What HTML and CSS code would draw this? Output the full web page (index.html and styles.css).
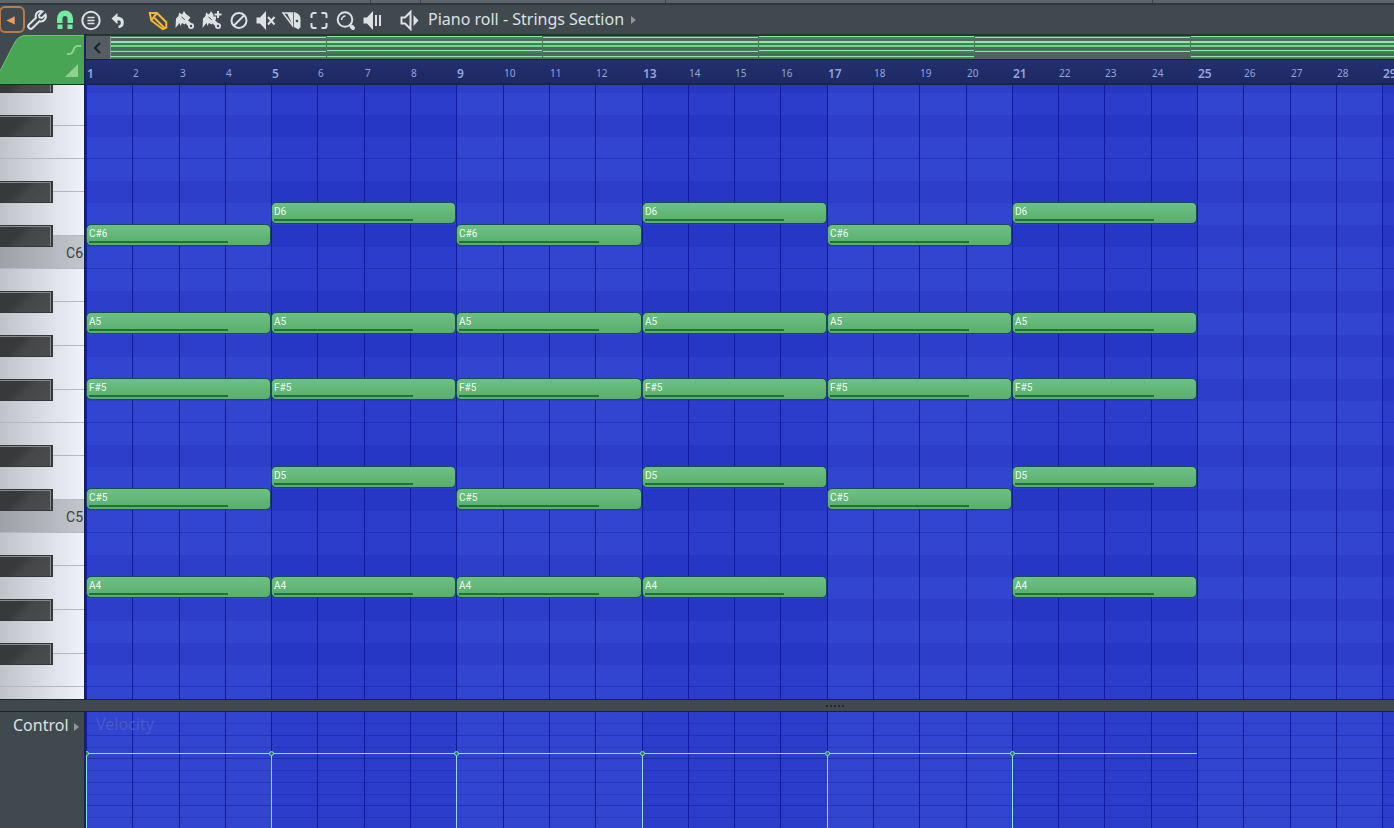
FILE: index.html
```html
<!DOCTYPE html>
<html lang="en">
<head>
  <meta charset="UTF-8">
  <title>Piano roll - Strings Section</title>
  <link rel="stylesheet" href="styles.css">
</head>
<body>
  <div class="window-edge"><span></span><span></span><span></span><span></span></div>

  <header class="toolbar">
    <button class="menu-btn" aria-label="Menu">
      <svg width="24" height="24" viewBox="0 0 24 24"><path d="M6 12.5 15 8v9z" fill="#f09a5c"/></svg>
    </button>
    <div class="tools tools-main">
      <button aria-label="Tools">
        <svg viewBox="0 0 22 22"><path d="M18.500 5.500 15 9l-2.500-.5L12 6l3.500-3.500a5 5 0 0 0-6.500 6.300L2 15.500a2.400 2.400 0 0 0 3.500 3.500l7-6.800a5 5 0 0 0 6-6.700z" class="line"/></svg>
      </button>
      <button aria-label="Snap">
        <svg viewBox="0 0 22 22"><path d="M3 14V9.500a8 8 0 0 1 16 0V14h-5.500V9.500a2.500 2.500 0 0 0-5 0V14zM3.500 15.500h5V20h-5zM13.500 15.500h5V20h-5z" fill="#73eda0"/></svg>
      </button>
      <button aria-label="Stamp">
        <svg viewBox="0 0 22 22"><circle cx="11" cy="11.500" r="8.700" class="line"/><path d="M7.500 8.500h7M7.500 11.500h7M7.500 14.500h7" class="line thin"/></svg>
      </button>
      <button aria-label="Undo">
        <svg viewBox="0 0 22 22"><path d="M4.500 9.500 10.500 4v3.800c4.200 0 6.300 2.200 6.300 5.700 0 3.200-1.700 5.500-5.300 5.500v-2.500c1.800-.2 2.300-1.200 2.300-2.800 0-1.700-.8-2.500-3.300-2.500v4z" class="solid"/></svg>
      </button>
    </div>
    <div class="tools tools-edit">
      <button aria-label="Draw">
        <svg viewBox="0 0 22 22" class="active"><path d="M2.800 4h7.200l9.300 9.200v5.300l-3.500 1.700L4.300 11.500zM4.300 11.500l2-3 3.700-4.500M7.500 9l9.500 9.500" class="line"/></svg>
      </button>
      <button aria-label="Paint">
        <svg viewBox="0 0 22 22"><path d="M2 9.500 4.500 7 5 3.500l3 2L10 2l2 3 4.500 3.500-6 7L8 14l-1.500 3-1-3L1.500 19z" class="solid"/><path d="m7.500 8 6 5" class="cut"/><path d="m12 12 5 5" class="line thick"/><circle cx="17" cy="17" r="3" class="solid"/><circle cx="17" cy="17" r="1.200" class="hole"/></svg>
      </button>
      <button aria-label="Paint sequence">
        <svg viewBox="0 0 22 22"><path d="M2 9.500 4.500 7 5 3.500l3 2L10 2l2 3 4.500 3.500-6 7L8 14l-1.500 3-1-3L1.500 19z" class="solid"/><path d="m7.500 8 6 5" class="cut"/><path d="m12 12 5 5" class="line thick"/><circle cx="17" cy="17" r="3" class="solid"/><circle cx="17" cy="17" r="1.200" class="hole"/><path d="M17 1v9M12.500 5.500h9" class="line halo"/><path d="M17 2v7M13.500 5.500h7" class="line"/></svg>
      </button>
      <button aria-label="Delete">
        <svg viewBox="0 0 22 22"><circle cx="11" cy="11.500" r="7.500" class="line"/><path d="m6 16.500 10-10" class="line"/></svg>
      </button>
      <button aria-label="Mute">
        <svg viewBox="0 0 22 22"><path d="M1.500 8.500H5L11 2v19l-6-6.500H1.500z" class="solid"/><path d="m13 8 6.500 7.500m0-7.500L13 15.500" class="line"/></svg>
      </button>
      <button aria-label="Slice">
        <svg viewBox="0 0 22 22"><path d="M2 4h9.500v12.500z" class="line thin"/><path d="M6 4h5.500v12z" class="solid"/><path d="M13 3c4 1 6.500 3.500 6.500 7v8l-2 2.500-4.500-2.500z" class="solid"/><circle cx="16" cy="12" r="1.300" class="hole"/></svg>
      </button>
      <button aria-label="Select">
        <svg viewBox="0 0 22 22"><path d="M3.500 9V6a2 2 0 0 1 2-2h3M13.500 4h3a2 2 0 0 1 2 2v3M18.500 14v3a2 2 0 0 1-2 2h-3M8.500 19h-3a2 2 0 0 1-2-2v-3" class="line"/></svg>
      </button>
      <button aria-label="Zoom">
        <svg viewBox="0 0 22 22"><circle cx="10" cy="10.500" r="7.300" class="line"/><path d="M6.500 11a4 4 0 0 1 4-4" class="line thin"/><path d="m16.500 17.500 1.500 1.500" class="line thick"/></svg>
      </button>
      <button aria-label="Playback">
        <svg viewBox="0 0 22 22"><path d="M1.500 8.500H5L11 2v19l-6-6.500H1.500z" class="solid"/><path d="M14 6v11M18 6v11" class="line"/></svg>
      </button>
    </div>
    <button class="title-btn">
      <svg viewBox="0 0 22 22"><path d="M2.500 8.500H6L11.500 3v17L6 14.500H2.500z" class="line"/><path d="m14.500 6 5 5.500-5 5.500z" class="solid"/></svg>
      <span>Piano roll - Strings Section</span>
      <i class="caret"></i>
    </button>
  </header>

  <main class="roll">
    <aside class="side">
      <div class="corner">
        <svg width="84" height="49" viewBox="0 0 84 49">
          <path d="M0 49V36L15 7Q19 0 26 0H84V49z" fill="#48a553"/>
          <path d="M0 36 15 7Q19 .5 26 .5H84" fill="none" stroke="#6fbf76"/>
          <path d="M67 19h3c4 0 3-8 7-8h4" fill="none" stroke="#8fd08f" stroke-width="2"/>
          <path d="M65 42 78 29v13z" fill="#8fd08f"/>
        </svg>
      </div>
      <div class="keyboard" id="keyboard"></div>
    </aside>
    <section class="stage">
      <div class="overview">
        <button class="scroll-btn" aria-label="Scroll left">
          <svg width="12" height="14" viewBox="0 0 12 14"><path d="M9 2 4 7l5 5" fill="none" stroke="#1c2226" stroke-width="2"/></svg>
        </button>
        <div class="minimap">
          <span class="low"></span><span class="high"></span><span class="low"></span>
          <span class="high"></span><span class="low no-bass"></span><span class="high"></span>
        </div>
      </div>
      <div class="ruler" id="ruler"></div>
      <div class="grid" id="grid"></div>
    </section>
  </main>

  <div class="splitter"><span></span></div>

  <section class="control">
    <div class="control-side">
      <button class="control-btn">Control <i class="caret"></i></button>
    </div>
    <div class="velocity" id="velocity">
      <span class="velocity-name">Velocity</span>
    </div>
  </section>

  <script src="script.js"></script>
</body>
</html>
```
FILE: styles.css
```css
*, *::before, *::after { box-sizing: border-box; }
body {
  margin: 0;
  height: 100vh;
  display: flex;
  flex-direction: column;
  overflow: hidden;
  background: #40494e;
  color: #dce1e3;
  font-family: "Noto Sans", "Open Sans", sans-serif;
}
button {
  margin: 0;
  padding: 0;
  border: none;
  background: none;
  color: inherit;
  font: inherit;
  cursor: pointer;
}
svg { display: block; }

/* toolbar */
.window-edge {
  flex: none;
  display: flex;
  height: 5px;
  background: #5b656c;
  border-bottom: 2px solid #30383d;
}
.window-edge span { border-right: 1px solid #3a4349; }
.window-edge span:nth-child(1) { width: 371px; }
.window-edge span:nth-child(2) { width: 50px; }
.window-edge span:nth-child(3) { width: 245px; }
.window-edge span:nth-child(4) { width: 487px; }
.toolbar {
  flex: none;
  display: flex;
  align-items: center;
  height: 29px;
}
.toolbar svg {
  width: 22px;
  height: 22px;
  margin: 0 auto;
}
.menu-btn {
  width: 26px;
  height: 27px;
  margin-left: -1px;
  border: 2px solid #b97a4e;
  border-radius: 6px;
}
.tools { display: flex; }
.tools button { flex: 1; }
.tools-main { width: 106px; }
.tools-edit { width: 241px; margin-left: 14px; }
.line {
  fill: none;
  stroke: #dce1e3;
  stroke-width: 2;
}
.thin { stroke-width: 1.5; }
.thick { stroke-width: 4; stroke-linecap: round; }
.halo { stroke: #40494e; stroke-width: 4; }
.active .line { stroke: #f9b63c; }
.solid { fill: #dce1e3; }
.cut { fill: none; stroke: #40494e; stroke-width: 1; }
.hole { fill: #40494e; }
.title-btn {
  display: flex;
  align-items: center;
  margin-left: 13px;
  font-size: 16px;
  line-height: 20px;
  white-space: nowrap;
}
.title-btn span { margin: 0 7px; padding-bottom: 2px; }
.caret {
  display: inline-block;
  border: 4px solid transparent;
  border-left: 5px solid #8d969a;
  border-right: none;
}

/* piano roll */
.roll {
  flex: 1;
  display: flex;
  min-height: 0;
}
.side {
  flex: none;
  display: flex;
  flex-direction: column;
  width: 86px;
  border-right: 2px solid #17245c;
}
.corner {
  height: 51px;
  padding-top: 1px;
  border-bottom: 1px solid #12381c;
}
.keyboard {
  flex: 1;
  overflow: hidden;
}
.octave:first-child { margin-top: -80px; }
.key {
  position: relative;
  height: 33px;
  padding: 7px 1px 0 0;
  border-bottom: 1px solid #b4b8c0;
  background: linear-gradient(90deg, #bfc3c8, #dde0e7 60%, #f0f2fa);
  color: #3c4046;
  font: 14px/20px Roboto, sans-serif;
  text-align: right;
}
.key.wide { height: 44px; }
.key.root { background: linear-gradient(90deg, #9da1a5, #c3c6cc); }
.key.has-black::after {
  content: "";
  position: absolute;
  z-index: 1;
  left: 0;
  bottom: -12px;
  width: 53px;
  height: 22px;
  border: solid #34383b;
  border-width: 1px 2px 1px 0;
  box-shadow: inset -1px 1px #85898b;
  background: linear-gradient(135deg, #37393b 35%, #454749 55%, #4a4c4e);
}
.stage {
  flex: 1;
  display: flex;
  flex-direction: column;
  min-width: 0;
}
.overview {
  flex: none;
  display: flex;
  height: 26px;
  border-top: 2px solid #25352f;
  border-bottom: 1px solid #16251f;
  overflow: hidden;
}
.scroll-btn {
  flex: none;
  width: 25px;
  padding-left: 5px;
  background: #535d62;
  border-right: 1px solid #8a9a8a;
}
.minimap {
  flex: 1;
  display: flex;
  min-width: 0;
  background: #4d5a61;
}
.minimap span {
  flex: 1 0 216px;
  border-right: 1px solid #47735a;
  background: linear-gradient(
    #93e6a9 0 1px, #41845a 1px 3px, #4d6862 3px 5px,
    #93e6a9 5px 7px, #2f8a48 7px 9px, #84c99a 9px 11px, #4d6862 11px 14px,
    #93e6a9 14px 15px, #41845a 15px 17px, #4d6862 17px 20px, #93e6a9 20px 21px, #4b7d60 21px);
}
.minimap .low {
  background: linear-gradient(
    #3d8054 0 1px, #93e6a9 1px 2px, #4d6862 2px 5px,
    #93e6a9 5px 7px, #2f8a48 7px 9px, #84c99a 9px 11px, #4d6862 11px 14px,
    #41845a 14px 15px, #93e6a9 15px 16px, #4d6862 16px 20px, #93e6a9 20px 21px, #4b7d60 21px);
}
.minimap .no-bass {
  background: linear-gradient(
    #3d8054 0 1px, #93e6a9 1px 2px, #4d6862 2px 5px,
    #93e6a9 5px 7px, #2f8a48 7px 9px, #84c99a 9px 11px, #4d6862 11px 14px,
    #41845a 14px 15px, #93e6a9 15px 16px, #53605f 16px);
}
.ruler {
  flex: none;
  display: flex;
  height: 25px;
  overflow: hidden;
  background: linear-gradient(#232f70, #1e2a62);
  border-bottom: 2px solid #16225a;
  color: #97a4dc;
  font-size: 10px;
  line-height: 27px;
}
.ruler span { flex: none; padding-left: 1px; }
.ruler .strong { font-size: 12px; font-weight: 600; }
.grid {
  position: relative;
  flex: 1;
  display: flex;
  overflow: hidden;
  /* one octave, B down to C */
  background: linear-gradient(
    #3245d0 0 22px, #2c3eca 22px 44px, #3245d0 44px 66px, #2c3eca 66px 88px,
    #3245d0 88px 110px, #2c3eca 110px 132px, #3245d0 132px 153px, #2436b8 153px 154px,
    #3245d0 154px 176px, #2c3eca 176px 198px, #3245d0 198px 220px, #2c3eca 220px 242px,
    #3245d0 242px 263px, #2436b8 263px) 0 -80px / 100% 264px;
}
.bar {
  flex: none;
  border-left: 1px solid #0f1d9c;
}
.bar.shaded { background: rgba(16, 30, 180, 0.2); }
.note {
  position: absolute;
  height: 22px;
  padding-left: 2px;
  border: 1px solid #1c4a55;
  border-radius: 5px;
  background: linear-gradient(#6cc083, #59ae6e);
  color: #effff0;
  font: 10px/18px Roboto, sans-serif;
}
.note::after {
  content: "";
  position: absolute;
  left: 2px;
  bottom: 2px;
  width: 76%;
  height: 2px;
  background: #1c7338;
}

/* splitter and control lane */
.splitter {
  flex: none;
  height: 13px;
  padding: 5px 0 0 826px;
  border-top: 1px solid #1b2330;
  border-bottom: 1px solid #1b2330;
}
.splitter span {
  display: block;
  width: 18px;
  height: 2px;
  background: repeating-linear-gradient(90deg, #22292d 0 2px, transparent 2px 4px);
}
.control {
  flex: none;
  display: flex;
  height: 116px;
}
.control-side {
  flex: none;
  width: 86px;
  padding: 3px 0 0 13px;
  border-right: 2px solid #17245c;
  font-size: 16px;
  line-height: 20px;
  white-space: nowrap;
}
.control-btn .caret { margin-left: 1px; }
.velocity {
  position: relative;
  flex: 1;
  display: flex;
  overflow: hidden;
  background: linear-gradient(
    transparent 0 11px, #2a3cbe 11px 12px, transparent 12px 23px, #2436b4 23px 24px,
    transparent 24px 35px, #2a3cbe 35px 36px, transparent 36px 46px, #2032ac 46px 47px) 0 0 / 100% 47px #3245d0;
}
.velocity-name {
  position: absolute;
  left: 10px;
  top: 2px;
  color: #4759cc;
  font-size: 16px;
  line-height: 20px;
}
.event {
  position: absolute;
  top: 41px;
  bottom: 0;
  border-top: 1px solid #93dde0;
  border-left: 1px solid #93dde0;
}
.event::before {
  content: "";
  position: absolute;
  left: -3px;
  top: -3px;
  width: 5px;
  height: 5px;
  border: 1px solid #8ad6b0;
  border-radius: 50%;
  background: #2b8050;
}
```
FILE: script.js
```js
const barWidth = 1111 / 24;
const rowHeight = 22;
const topOffset = -15;
const rows = ["G#6", "G6", "F#6", "F6", "E6", "D#6", "D6", "C#6", "C6", "B5", "A#5", "A5",
  "G#5", "G5", "F#5", "F5", "E5", "D#5", "D5", "C#5", "C5", "B4", "A#4", "A4"];
const chords = [
  ["C#6", "A5", "F#5", "C#5", "A4"],
  ["D6", "A5", "F#5", "D5", "A4"],
  ["C#6", "A5", "F#5", "C#5", "A4"],
  ["D6", "A5", "F#5", "D5", "A4"],
  ["C#6", "A5", "F#5", "C#5"],
  ["D6", "A5", "F#5", "D5", "A4"]
];

const ruler = document.getElementById("ruler");
const grid = document.getElementById("grid");
const velocity = document.getElementById("velocity");
const keyboard = document.getElementById("keyboard");
const barCount = Math.ceil(grid.clientWidth / barWidth);

function barX(bar) {
  return Math.round(bar * barWidth);
}

function add(parent, tag, className, text) {
  const el = document.createElement(tag);
  el.className = className;
  el.textContent = text || "";
  parent.appendChild(el);
  return el;
}

// octaves from the top, as many as fit the keyboard
const keyboardHeight = keyboard.clientHeight;
let bottom = -80;
for (let octave = 6; bottom < keyboardHeight && octave >= 0; octave--) {
  bottom += rowHeight * 12;
  const group = add(keyboard, "div", "octave");
  add(group, "div", "key has-black");
  add(group, "div", "key wide has-black");
  add(group, "div", "key wide has-black");
  add(group, "div", "key");
  add(group, "div", "key has-black");
  add(group, "div", "key wide has-black");
  add(group, "div", "key root", bottom <= keyboardHeight ? "C" + octave : "");
}

for (let i = 0; i < barCount; i++) {
  const width = barX(i + 1) - barX(i) + "px";
  const shaded = Math.floor(i / 4) % 2 ? " shaded" : "";
  add(ruler, "span", i % 4 ? "" : "strong", String(i + 1)).style.width = width;
  add(grid, "div", "bar" + shaded).style.width = width;
  add(velocity, "div", "bar" + shaded).style.width = width;
}

chords.forEach((chord, i) => {
  const left = barX(i * 4);
  const width = barX(i * 4 + 4) - left;
  chord.forEach(name => {
    const note = add(grid, "div", "note", name);
    note.style.left = left + "px";
    note.style.top = rows.indexOf(name) * rowHeight + topOffset + "px";
    note.style.width = width + "px";
  });
  const event = add(velocity, "div", "event");
  event.style.left = left + "px";
  event.style.width = width + "px";
});
```
